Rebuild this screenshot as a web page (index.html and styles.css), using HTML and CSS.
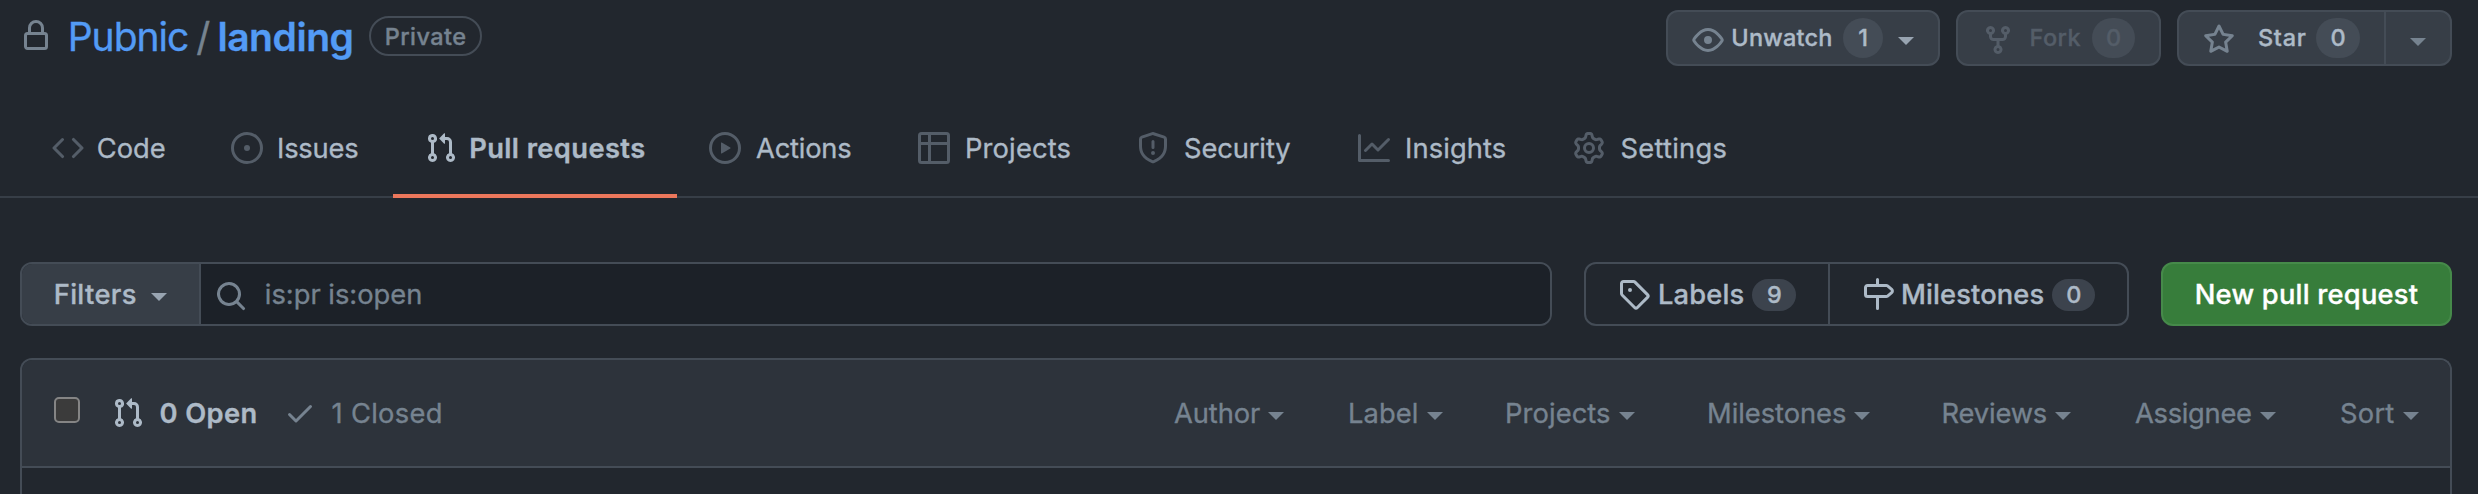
FILE: index.html
```
<!DOCTYPE html>
<html lang="en">
<head>
<meta charset="utf-8">
<title>Pull requests · Pubnic/landing</title>
<link rel="stylesheet" href="styles.css">
</head>
<body>
<svg class="sprite" aria-hidden="true">
  <symbol id="pr" viewBox="0 0 16 16"><path fill-rule="evenodd" d="M7.177 3.073L9.573.677A.25.25 0 0110 .854v4.792a.25.25 0 01-.427.177L7.177 3.427a.25.25 0 010-.354zM3.75 2.5a.75.75 0 100 1.5.75.75 0 000-1.5zm-2.25.75a2.25 2.25 0 113 2.122v5.256a2.251 2.251 0 11-1.5 0V5.372A2.25 2.25 0 011.5 3.25zM11 2.5h-1V4h1a1 1 0 011 1v5.628a2.251 2.251 0 101.5 0V5A2.5 2.5 0 0011 2.5zm1 10.25a.75.75 0 111.5 0 .75.75 0 01-1.5 0zM3.75 12a.75.75 0 100 1.5.75.75 0 000-1.5z"/></symbol>
</svg>

<header class="repo-header">
  <div class="repo-title">
    <svg class="icon icon-muted" viewBox="0 0 16 16"><path fill-rule="evenodd" d="M4 4v2h-.25A1.75 1.75 0 002 7.75v5.5c0 .966.784 1.75 1.75 1.75h8.5A1.75 1.75 0 0014 13.25v-5.5A1.75 1.75 0 0012.25 6H12V4a4 4 0 10-8 0zm6.5 2V4a2.5 2.5 0 10-5 0v2h5zM12 7.5h.25a.25.25 0 01.25.25v5.5a.25.25 0 01-.25.25h-8.5a.25.25 0 01-.25-.25v-5.5a.25.25 0 01.25-.25H12z"/></svg>
    <a class="owner">Pubnic</a><span class="slash">/</span><a class="repo">landing</a>
    <span class="badge">Private</span>
  </div>
  <div class="repo-actions">
    <button class="btn btn-watch">
      <svg class="icon icon-muted" viewBox="0 0 16 16"><path fill-rule="evenodd" d="M1.679 7.932c.412-.621 1.242-1.75 2.366-2.717C5.175 4.242 6.527 3.5 8 3.5c1.473 0 2.824.742 3.955 1.715 1.124.967 1.954 2.096 2.366 2.717a.119.119 0 010 .136c-.412.621-1.242 1.75-2.366 2.717C10.825 11.758 9.473 12.5 8 12.5c-1.473 0-2.824-.742-3.955-1.715C2.92 9.818 2.09 8.69 1.679 8.068a.119.119 0 010-.136zM8 2c-1.981 0-3.67.992-4.933 2.078C1.797 5.169.88 6.423.43 7.1a1.619 1.619 0 000 1.798c.45.678 1.367 1.932 2.637 3.024C4.329 13.008 6.019 14 8 14c1.981 0 3.67-.992 4.933-2.078 1.27-1.091 2.187-2.345 2.637-3.023a1.619 1.619 0 000-1.798c-.45-.678-1.367-1.932-2.637-3.023C11.671 2.992 9.981 2 8 2zm0 8a2 2 0 100-4 2 2 0 000 4z"/></svg>
      <span class="btn-text">Unwatch</span><span class="count">1</span><i class="caret"></i>
    </button>
    <button class="btn btn-fork" disabled>
      <svg class="icon" viewBox="0 0 16 16"><path fill-rule="evenodd" d="M5 3.25a.75.75 0 11-1.5 0 .75.75 0 011.5 0zm0 2.122a2.25 2.25 0 10-1.5 0v.878A2.25 2.25 0 005.75 8.5h1.5v2.128a2.251 2.251 0 101.5 0V8.5h1.5a2.25 2.25 0 002.25-2.25v-.878a2.25 2.25 0 10-1.5 0v.878a.75.75 0 01-.75.75h-4.5A.75.75 0 015 6.25v-.878zm3.75 7.378a.75.75 0 11-1.5 0 .75.75 0 011.5 0zm3-8.75a.75.75 0 100-1.5.75.75 0 000 1.5z"/></svg>
      <span class="btn-text">Fork</span><span class="count">0</span>
    </button>
    <div class="btn btn-star">
      <div class="star-main">
        <svg class="icon icon-muted" viewBox="0 0 16 16"><path fill-rule="evenodd" d="M8 .25a.75.75 0 01.673.418l1.882 3.815 4.21.612a.75.75 0 01.416 1.279l-3.046 2.97.719 4.192a.75.75 0 01-1.088.791L8 12.347l-3.766 1.98a.75.75 0 01-1.088-.79l.72-4.194L.818 6.374a.75.75 0 01.416-1.28l4.21-.611L7.327.668A.75.75 0 018 .25zm0 2.445L6.615 5.5a.75.75 0 01-.564.41l-3.097.45 2.24 2.184a.75.75 0 01.216.664l-.528 3.084 2.769-1.456a.75.75 0 01.698 0l2.77 1.456-.53-3.084a.75.75 0 01.216-.664l2.24-2.183-3.096-.45a.75.75 0 01-.564-.41L8 2.694v.001z"/></svg>
        <span class="btn-text">Star</span><span class="count">0</span>
      </div>
      <div class="star-menu"><i class="caret"></i></div>
    </div>
  </div>
</header>

<nav class="tabs">
  <a class="tab tab-code"><svg class="icon" viewBox="0 0 16 16"><path fill-rule="evenodd" d="M4.72 3.22a.75.75 0 011.06 1.06L2.06 8l3.72 3.72a.75.75 0 11-1.06 1.06L.47 8.53a.75.75 0 010-1.06l4.25-4.25zm6.56 0a.75.75 0 10-1.06 1.06L13.94 8l-3.72 3.72a.75.75 0 101.06 1.06l4.25-4.25a.75.75 0 000-1.06l-4.25-4.25z"/></svg><span>Code</span></a>
  <a class="tab tab-issues"><svg class="icon" viewBox="0 0 16 16"><circle class="line" cx="8" cy="8" r="7.25"/><circle cx="8" cy="8" r="1.5"/></svg><span>Issues</span></a>
  <a class="tab tab-pulls selected"><svg class="icon"><use href="#pr"/></svg><span>Pull requests</span></a>
  <a class="tab tab-actions"><svg class="icon" viewBox="0 0 16 16"><circle class="line" cx="8" cy="8" r="7.25"/><path d="M6.379 5.227A.25.25 0 006 5.442v5.117a.25.25 0 00.379.214l4.264-2.559a.25.25 0 000-.428L6.379 5.227z"/></svg><span>Actions</span></a>
  <a class="tab tab-projects"><svg class="icon" viewBox="0 0 16 16"><rect class="line" x=".75" y=".75" width="14.5" height="14.5" rx="1"/><path class="line" d="M5.75 1v14.5M.5 5.75h15"/></svg><span>Projects</span></a>
  <a class="tab tab-security"><svg class="icon" viewBox="0 0 16 16"><path fill-rule="evenodd" d="M7.467.133a1.75 1.75 0 011.066 0l5.25 1.68A1.75 1.75 0 0115 3.48V7c0 1.566-.32 3.182-1.303 4.682-.983 1.498-2.585 2.813-5.032 3.855a1.7 1.7 0 01-1.33 0c-2.447-1.042-4.049-2.357-5.032-3.855C1.32 10.182 1 8.566 1 7V3.48a1.75 1.75 0 011.217-1.667l5.25-1.68zm.61 1.429a.25.25 0 00-.153 0l-5.25 1.68a.25.25 0 00-.174.238V7c0 1.358.275 2.666 1.057 3.86.784 1.194 2.121 2.34 4.366 3.297a.2.2 0 00.154 0c2.245-.956 3.582-2.104 4.366-3.298C13.225 9.666 13.5 8.36 13.5 7V3.48a.25.25 0 00-.174-.237l-5.25-1.68zM9 10.5a1 1 0 11-2 0 1 1 0 012 0zm-.25-5.75a.75.75 0 10-1.5 0v3a.75.75 0 001.5 0v-3z"/></svg><span>Security</span></a>
  <a class="tab tab-insights"><svg class="icon" viewBox="0 0 16 16"><path fill-rule="evenodd" d="M1.5 1.75a.75.75 0 00-1.5 0v12.5c0 .414.336.75.75.75h14.5a.75.75 0 000-1.5H1.5V1.75zm14.28 2.53a.75.75 0 00-1.06-1.06L10 7.94 7.53 5.47a.75.75 0 00-1.06 0L3.22 8.72a.75.75 0 001.06 1.06L7 7.06l2.47 2.47a.75.75 0 001.06 0l5.25-5.25z"/></svg><span>Insights</span></a>
  <a class="tab tab-settings"><svg class="icon" viewBox="0 0 16 16"><path fill-rule="evenodd" d="M7.429 1.525a6.593 6.593 0 011.142 0c.036.003.108.036.137.146l.289 1.105c.147.56.55.967.997 1.189.174.086.341.183.501.29.417.278.97.423 1.53.27l1.102-.303c.11-.03.175.016.195.046.219.31.41.641.573.989.014.031.022.11-.059.19l-.815.806c-.411.406-.562.957-.53 1.456a4.588 4.588 0 010 .582c-.032.499.119 1.05.53 1.456l.815.806c.08.08.073.159.059.19a6.494 6.494 0 01-.573.99c-.02.029-.086.074-.195.045l-1.103-.303c-.559-.153-1.112-.008-1.529.27-.16.107-.327.204-.5.29-.449.222-.851.628-.998 1.189l-.289 1.105c-.029.11-.101.143-.137.146a6.613 6.613 0 01-1.142 0c-.036-.003-.108-.037-.137-.146l-.289-1.105c-.147-.56-.55-.967-.997-1.189a4.502 4.502 0 01-.501-.29c-.417-.278-.97-.423-1.53-.27l-1.102.303c-.11.03-.175-.016-.195-.046a6.492 6.492 0 01-.573-.989c-.014-.031-.022-.11.059-.19l.815-.806c.411-.406.562-.957.53-1.456a4.587 4.587 0 010-.582c.032-.499-.119-1.05-.53-1.456l-.815-.806c-.08-.08-.073-.159-.059-.19a6.44 6.44 0 01.573-.99c.02-.029.086-.075.195-.045l1.103.303c.559.153 1.112.008 1.529-.27.16-.107.327-.204.5-.29.449-.222.851-.628.998-1.189l.289-1.105c.029-.11.101-.143.137-.146zM8 0c-.236 0-.47.01-.701.03-.743.065-1.29.615-1.458 1.261l-.29 1.106c-.017.066-.078.158-.211.224a5.994 5.994 0 00-.668.386c-.123.082-.233.09-.3.071L3.27 2.776c-.644-.177-1.392.02-1.82.63a7.977 7.977 0 00-.704 1.217c-.315.675-.111 1.422.363 1.891l.815.806c.05.048.098.147.088.294a6.084 6.084 0 000 .772c.01.147-.038.246-.088.294l-.815.806c-.474.469-.678 1.216-.363 1.891.2.428.436.835.704 1.218.428.609 1.176.806 1.82.63l1.103-.303c.066-.019.176-.011.299.071.213.143.436.272.668.386.133.066.194.158.212.224l.289 1.106c.169.646.715 1.196 1.458 1.26a8.094 8.094 0 001.402 0c.743-.064 1.29-.614 1.458-1.26l.29-1.106c.017-.066.078-.158.211-.224a5.98 5.98 0 00.668-.386c.123-.082.233-.09.3-.071l1.102.302c.644.177 1.392-.02 1.82-.63.268-.382.505-.789.704-1.217.315-.675.111-1.422-.364-1.891l-.814-.806c-.05-.048-.098-.147-.088-.294a6.1 6.1 0 000-.772c-.01-.147.039-.246.088-.294l.814-.806c.475-.469.679-1.216.364-1.891a7.992 7.992 0 00-.704-1.218c-.428-.609-1.176-.806-1.82-.63l-1.103.303c-.066.019-.176.011-.299-.071a5.991 5.991 0 00-.668-.386c-.133-.066-.194-.158-.212-.224L10.16 1.29C9.99.645 9.444.095 8.701.031A8.094 8.094 0 008 0zm1.5 8a1.5 1.5 0 11-3 0 1.5 1.5 0 013 0zM11 8a3 3 0 11-6 0 3 3 0 016 0z"/></svg><span>Settings</span></a>
</nav>

<section class="toolbar">
  <div class="search-group">
    <button class="filters"><span class="lbl">Filters</span><i class="caret"></i></button>
    <div class="search">
      <svg class="icon icon-muted" viewBox="0 0 16 16"><path fill-rule="evenodd" d="M11.5 7a4.499 4.499 0 11-8.998 0A4.499 4.499 0 0111.5 7zm-.82 4.74a6 6 0 111.06-1.06l3.04 3.04a.75.75 0 11-1.06 1.06l-3.04-3.04z"/></svg>
      <span class="query lbl">is:pr is:open</span>
    </div>
  </div>
  <div class="subnav">
    <a class="subnav-item labels"><svg class="icon" viewBox="0 0 16 16"><path fill-rule="evenodd" d="M2.5 7.775V2.75a.25.25 0 01.25-.25h5.025a.25.25 0 01.177.073l6.25 6.25a.25.25 0 010 .354l-5.025 5.025a.25.25 0 01-.354 0l-6.25-6.25a.25.25 0 01-.073-.177zm-1.5 0V2.75C1 1.784 1.784 1 2.75 1h5.025c.464 0 .91.184 1.238.513l6.25 6.25a1.75 1.75 0 010 2.474l-5.026 5.026a1.75 1.75 0 01-2.474 0l-6.25-6.25A1.75 1.75 0 011 7.775zM6 5a1 1 0 100 2 1 1 0 000-2z"/></svg><span class="subnav-text lbl">Labels</span><span class="counter">9</span></a>
    <a class="subnav-item milestones"><svg class="icon" viewBox="0 0 16 16"><path fill-rule="evenodd" d="M7.75 0a.75.75 0 01.75.75V3h3.634c.414 0 .814.147 1.13.414l2.07 1.75a1.75 1.75 0 010 2.672l-2.07 1.75a1.75 1.75 0 01-1.13.414H8.5v5.25a.75.75 0 11-1.5 0V10H2.75A1.75 1.75 0 011 8.25v-3.5C1 3.784 1.784 3 2.75 3H7V.75A.75.75 0 017.75 0zm0 8.5h4.384a.25.25 0 00.161-.06l2.07-1.75a.25.25 0 000-.38l-2.07-1.75a.25.25 0 00-.161-.06H2.75a.25.25 0 00-.25.25v3.5c0 .138.112.25.25.25h5z"/></svg><span class="subnav-text lbl">Milestones</span><span class="counter">0</span></a>
  </div>
  <button class="new-pr">New pull request</button>
</section>

<section class="list">
  <div class="list-header">
    <span class="checkbox"></span>
    <a class="state state-open"><svg class="icon"><use href="#pr"/></svg><span>0 Open</span></a>
    <a class="state state-closed"><svg class="icon" viewBox="0 0 16 16"><path fill-rule="evenodd" d="M13.78 4.22a.75.75 0 010 1.06l-7.25 7.25a.75.75 0 01-1.06 0L2.22 9.28a.75.75 0 011.06-1.06L6 10.94l6.72-6.72a.75.75 0 011.06 0z"/></svg><span>1 Closed</span></a>
    <div class="list-filters">
      <a class="filter f-author"><span>Author</span><i class="caret"></i></a>
      <a class="filter f-label"><span>Label</span><i class="caret"></i></a>
      <a class="filter f-projects"><span>Projects</span><i class="caret"></i></a>
      <a class="filter f-milestones"><span>Milestones</span><i class="caret"></i></a>
      <a class="filter f-reviews"><span>Reviews</span><i class="caret"></i></a>
      <a class="filter f-assignee"><span>Assignee</span><i class="caret"></i></a>
      <a class="filter f-sort"><span>Sort</span><i class="caret"></i></a>
    </div>
  </div>
</section>
</body>
</html>
```
FILE: styles.css
```
:root {
  --canvas: #22272e;
  --inset: #1c2128;
  --header: #2d333b;
  --button: #373e47;
  --border: #444c56;
  --faint: #545d68;
  --muted: #768390;
  --text: #adbac7;
  --link: #539bf5;
}

* { box-sizing: border-box; }

body {
  margin: 0;
  height: 494px;
  overflow: hidden;
  display: flex;
  flex-direction: column;
  background: var(--canvas);
  color: var(--text);
  font: 400 27.3px/32px Inter, "Liberation Sans", sans-serif;
  -webkit-text-stroke: .35px;
  white-space: nowrap;
}

button { font: inherit; color: inherit; margin: 0; padding: 0; }

.sprite { display: none; }
.icon { width: 32px; height: 32px; flex: none; fill: currentColor; }
.icon-muted { color: var(--muted); }
.line { fill: none; stroke: currentColor; stroke-width: 1.5; }

.caret {
  flex: none;
  width: 16px;
  border: 8px solid transparent;
  border-top-color: currentColor;
  border-bottom: 0;
  margin: 6px 0 0 8px;
}

/* Optical centring of labels beside icons */
.tab span, .lbl, .state span, .filter span { padding-top: 1.5px; }

/* Repository header */
.repo-header {
  flex: none;
  display: flex;
  justify-content: space-between;
  height: 98px;
  padding: 0 26px 0 20px;
}
.repo-title { display: flex; align-items: center; height: 72px; font-size: 39px; line-height: 48px; }
.owner, .slash, .repo { padding-top: 1px; }
.owner { margin-left: 15.7px; color: var(--link); letter-spacing: -1.01px; }
.slash { margin-left: 7.9px; color: var(--muted); }
.repo { margin-left: 7.2px; color: var(--link); font-weight: 600; letter-spacing: -.45px; }
.badge {
  display: flex;
  align-items: center;
  justify-content: center;
  width: 113px;
  height: 40px;
  padding-top: 1px;
  margin-left: 15.6px;
  border: 2px solid var(--border);
  border-radius: 20px;
  color: var(--muted);
  font-size: 23.5px;
  font-weight: 500;
  letter-spacing: .44px;
}

.repo-actions { display: flex; align-items: center; gap: 16px; height: 76px; }
.btn {
  display: flex;
  align-items: center;
  height: 56px;
  border: 2px solid var(--border);
  border-radius: 12px;
  background: var(--button);
  font-size: 23.5px;
  font-weight: 500;
}
.btn .icon { margin-top: 4px; }
.count {
  display: flex;
  align-items: center;
  justify-content: center;
  width: 43px;
  height: 40px;
  border-radius: 20px;
  background: var(--border);
}
.btn-watch { width: 274px; padding-left: 24px; }
.btn-watch .btn-text { margin-left: 7.3px; letter-spacing: .22px; }
.btn-watch .count { width: 40px; margin-left: 10.4px; }
.btn-watch .caret { margin-left: 15px; color: #98a4b1; }
.btn-fork { width: 205px; padding-left: 24px; color: var(--faint); }
.btn-fork .btn-text { margin-left: 15.5px; letter-spacing: .45px; }
.btn-fork .count { margin-left: 11px; }
.btn-star { width: 275px; }
.star-main { display: flex; align-items: center; width: 205px; height: 52px; padding-left: 24px; }
.star-main .btn-text { margin-left: 23px; letter-spacing: .69px; }
.star-main .count { width: 44px; margin-left: 9.5px; }
.star-menu {
  flex: 1;
  display: flex;
  align-items: center;
  height: 52px;
  padding-left: 16px;
  border-left: 2px solid var(--border);
}
.star-menu .caret { margin-top: 8px; color: var(--muted); }

/* Section tabs */
.tabs {
  flex: none;
  display: grid;
  grid-template-columns: 179px 194px 284px 209px 219px 221px 215px 200px;
  height: 100px;
  padding-left: 20px;
  box-shadow: inset 0 -2px var(--button);
}
.tab { display: flex; align-items: center; padding-left: 32px; }
.tab .icon { color: var(--faint); }
.tab span { margin-left: 15px; }
.tab-code span { margin-left: 12.8px; }
.tab-issues span { margin-left: 14px; letter-spacing: -.2px; }
.tab-pulls span { margin-left: 12.2px; letter-spacing: .4px; font-weight: 600; }
.tab-actions span { letter-spacing: -.2px; }
.tab-projects span { letter-spacing: .16px; }
.tab-security span { letter-spacing: -.1px; }
.tab-insights span { letter-spacing: .12px; }
.tab-settings span { margin-left: 15.5px; letter-spacing: .27px; }
.tab.selected { box-shadow: inset 0 -4px #ec775c; }
.selected .icon { color: var(--text); }

/* Search and actions */
.toolbar { flex: none; display: flex; gap: 32px; height: 64px; margin: 64px 26px 0 20px; }
.search-group {
  flex: 1;
  display: flex;
  overflow: hidden;
  border: 2px solid var(--border);
  border-radius: 12px;
}
.filters {
  display: flex;
  align-items: center;
  width: 179px;
  padding-left: 31.7px;
  border: 0;
  border-right: 2px solid var(--border);
  background: var(--button);
  font-weight: 500;
  letter-spacing: .36px;
}
.filters .caret { margin-left: 14.3px; color: #98a4b1; }
.search { flex: 1; display: flex; align-items: center; padding-left: 14px; background: var(--inset); color: var(--muted); }
.search .icon { margin-top: 4px; }
.query { margin-left: 17.8px; }

.subnav { display: flex; width: 545px; border: 2px solid var(--border); border-radius: 12px; font-weight: 500; }
.subnav-item { display: flex; align-items: center; padding-left: 32px; }
.labels { width: 244px; border-right: 2px solid var(--border); }
.labels .subnav-text { margin-left: 8px; letter-spacing: .16px; }
.milestones .subnav-text { margin-left: 7px; letter-spacing: .13px; }
.counter {
  width: 43px;
  height: 32px;
  margin-left: 8px;
  margin-top: 2px;
  border-radius: 16px;
  background: #3c434d;
  font-size: 23.5px;
  text-align: center;
}
.labels .counter { width: 44px; }
.new-pr {
  width: 291px;
  padding-top: 1.5px;
  border: 2px solid #468a4a;
  border-radius: 12px;
  background: #377d3b;
  color: #fff;
  font-weight: 500;
  letter-spacing: .23px;
}

/* Pull request list */
.list {
  flex: 1;
  margin: 32px 26px 0 20px;
  border: 2px solid var(--border);
  border-bottom: 0;
  border-radius: 12px 12px 0 0;
}
.list-header {
  display: flex;
  align-items: center;
  height: 108px;
  padding: 0 32px;
  border-bottom: 2px solid var(--border);
  border-radius: 10px 10px 0 0;
  background: var(--header);
  color: var(--muted);
}
.checkbox {
  width: 26px;
  height: 26px;
  margin-bottom: 6px;
  border: 2px solid #858585;
  border-radius: 5px;
  background: #3b3b3b;
}
.state { display: flex; align-items: center; }
.state span { margin-left: 15.5px; }
.state-open { margin-left: 32px; color: var(--text); font-weight: 600; letter-spacing: .4px; }
.state-closed { margin-left: 26.4px; letter-spacing: .3px; }
.list-filters {
  display: grid;
  grid-template-columns: 174px 157px 202px 234.5px 193.5px 205px 78px;
  margin-left: auto;
}
.filter { display: flex; align-items: center; }
.f-author { letter-spacing: -.08px; }
.f-label { letter-spacing: .1px; }
.f-milestones { letter-spacing: -.03px; }
.f-projects { letter-spacing: .1px; }
.f-reviews { letter-spacing: -.15px; }
.f-assignee { letter-spacing: -.29px; }
.f-sort { letter-spacing: .25px; }
```
